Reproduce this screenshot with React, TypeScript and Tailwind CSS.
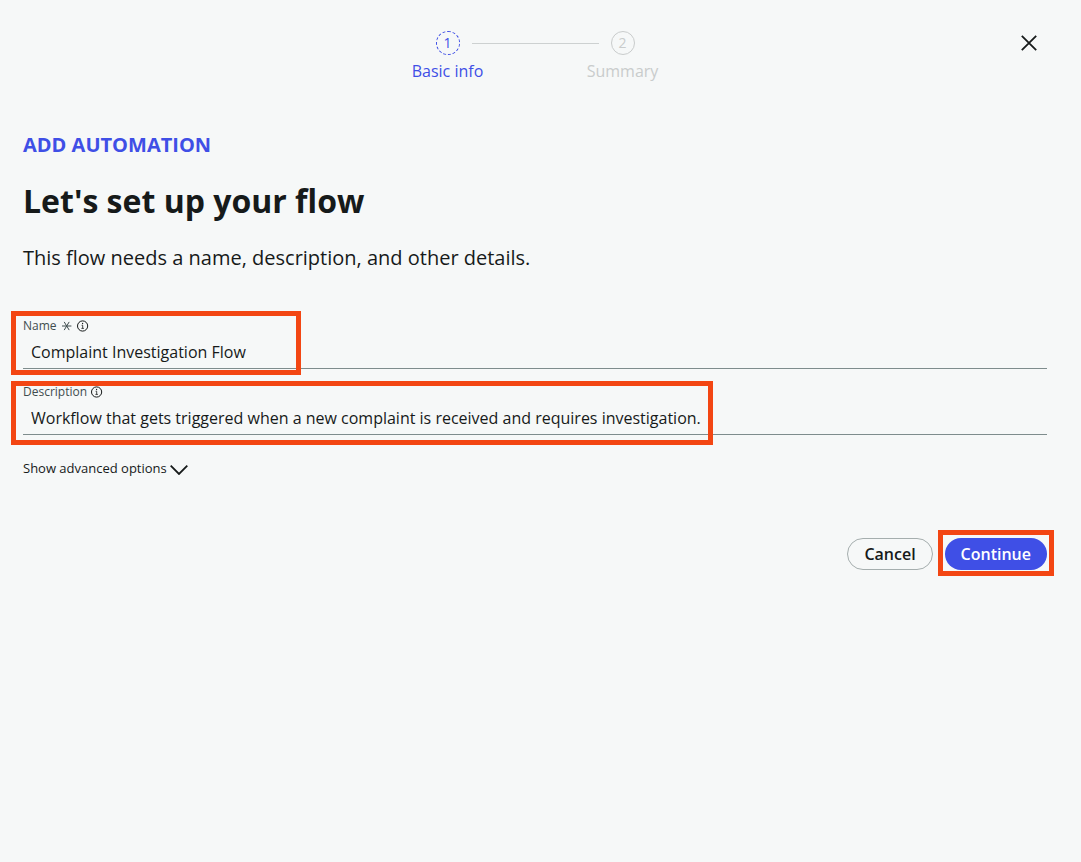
import { useState } from "react";
import type { ReactNode } from "react";

function InfoIcon() {
  return (
    <svg className="size-3" viewBox="0 0 12 12" fill="none" stroke="#161a1a" aria-hidden="true">
      <circle cx="5.6" cy="6" r="5.1" />
      <path d="M4.6 5.3h1.1v3.1M4.4 8.4h2.5" strokeWidth="0.8" />
      <circle cx="5.6" cy="3.5" r="0.65" fill="#161a1a" stroke="none" />
    </svg>
  );
}

function RequiredIcon() {
  return (
    <svg className="size-3" viewBox="0 0 12 12" fill="none" stroke="#3f4d4f" aria-hidden="true">
      <path d="M1 6h9.4M3.2 1.9L8.2 10.1M8.2 1.9L3.2 10.1" />
    </svg>
  );
}

function Highlight({ className }: { className: string }) {
  return (
    <span
      aria-hidden="true"
      className={`pointer-events-none absolute border-5 border-[#f34613] ${className}`}
    />
  );
}

type FieldProps = {
  id: string;
  label: string;
  value: string;
  onChange: (value: string) => void;
  required?: boolean;
  children?: ReactNode;
};

function Field({ id, label, value, onChange, required, children }: FieldProps) {
  return (
    <div className="relative">
      <div className="flex h-5 items-center gap-1 pt-0.5">
        <label htmlFor={id} className="text-xs text-[#3f4d4f]">
          {label}
        </label>
        {required && <RequiredIcon />}
        <InfoIcon />
      </div>
      <input
        id={id}
        type="text"
        required={required}
        value={value}
        onChange={(e) => onChange(e.target.value)}
        className="block h-[34px] w-full border-b border-[#7e8c8d] bg-transparent px-2 text-base text-[#161a1a] outline-none"
      />
      {children}
    </div>
  );
}

export default function App() {
  const [name, setName] = useState("Complaint Investigation Flow");
  const [description, setDescription] = useState(
    "Workflow that gets triggered when a new complaint is received and requires investigation.",
  );

  return (
    <main className="min-h-screen bg-[#f6f8f8] pt-[31px] pr-[34px] pb-8 pl-[23px] font-['Open_Sans',sans-serif] text-[#161a1a]">
      <header className="grid grid-cols-[1fr_auto_1fr] items-start">
        <ol className="col-start-2 flex">
          <li className="flex w-24 flex-col items-center gap-1 text-[#3f4fe6]" aria-current="step">
            <span className="flex size-6 items-center justify-center rounded-full border border-dashed border-[#3f4fe6] text-sm">
              1
            </span>
            <span className="text-base">Basic info</span>
          </li>
          <li aria-hidden="true" className="-mx-6 mt-3 h-px w-[127px] bg-[#cdd1d1]" />
          <li className="flex w-24 flex-col items-center gap-1 text-[#c9cccc]">
            <span className="flex size-6 items-center justify-center rounded-full border border-[#c9cccc] text-sm">
              2
            </span>
            <span className="text-base">Summary</span>
          </li>
        </ol>
        <button type="button" aria-label="Close" className="mr-1.5 flex size-6 items-center justify-center justify-self-end">
          <svg className="size-4" viewBox="0 0 16 16" fill="none" stroke="#161a1a" strokeWidth="1.8" aria-hidden="true">
            <path d="M0.8 0.8l14.4 14.4M15.2 0.8L0.8 15.2" />
          </svg>
        </button>
      </header>

      <p className="mt-12 text-xl font-bold text-[#3f4fe6]">ADD AUTOMATION</p>
      <h1 className="mt-5 text-[32px] leading-11 font-bold">Let's set up your flow</h1>
      <p className="mt-[21px] text-xl">This flow needs a name, description, and other details.</p>

      <form className="mt-[43px]" onSubmit={(e) => e.preventDefault()}>
        <div className="flex flex-col gap-3">
          <Field id="name" label="Name" value={name} onChange={setName} required>
            <Highlight className="-top-1 -left-3 h-16 w-[290px]" />
          </Field>
          <Field id="description" label="Description" value={description} onChange={setDescription}>
            <Highlight className="top-0 -left-3 h-16 w-[702px]" />
          </Field>
        </div>

        <button type="button" className="mt-6 flex h-5 items-center gap-[3px] text-[13px]">
          Show advanced options
          <svg className="mt-0.5 h-2.5 w-[18px]" viewBox="0 0 18 10" fill="none" stroke="#161a1a" strokeWidth="1.8" aria-hidden="true">
            <path d="M0.7 0.7L9 9l8.3-8.3" />
          </svg>
        </button>

        <div className="mt-[59px] flex justify-end gap-3">
          <button type="button" className="h-8 rounded-full border border-[#a5aeae] px-4 text-base font-semibold">
            Cancel
          </button>
          <div className="relative">
            <button type="submit" className="block h-8 rounded-full bg-[#3f4fe6] px-4 text-base font-semibold text-white">
              Continue
            </button>
            <Highlight className="-inset-x-[7px] -top-2 -bottom-1.5" />
          </div>
        </div>
      </form>
    </main>
  );
}
